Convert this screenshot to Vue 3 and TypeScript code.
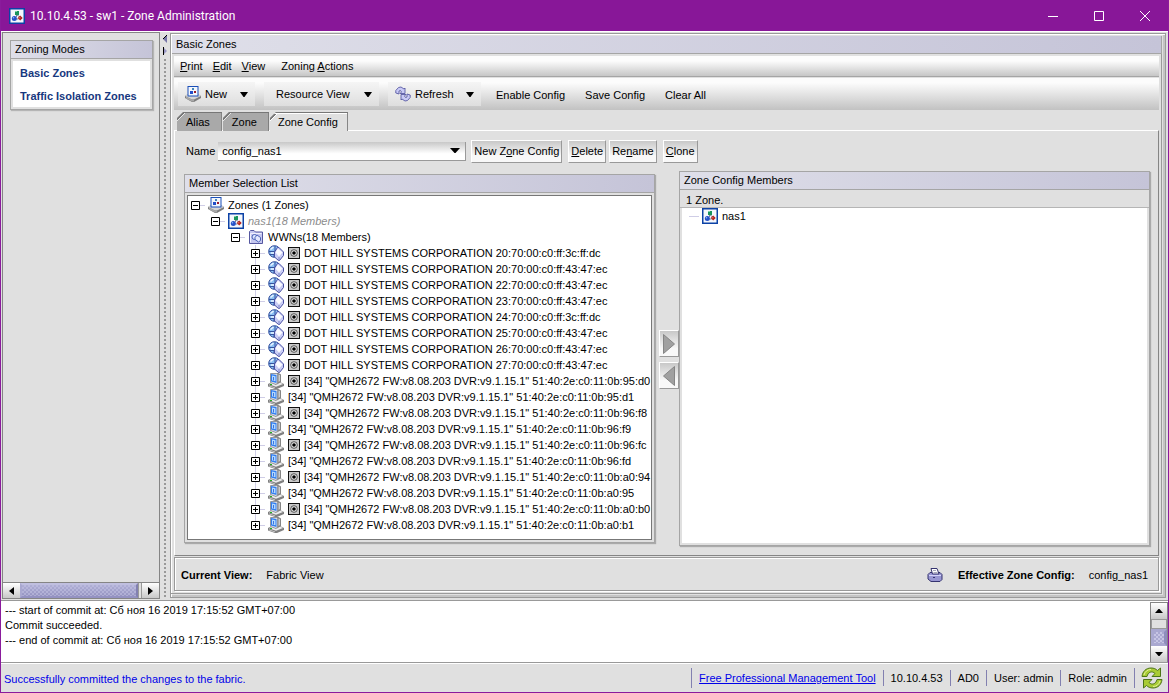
<script setup lang="ts">
import { ref } from 'vue'

interface TreeRow {
  level: number
  icon: string
  label: string
  target?: boolean
  open?: boolean
}

const storage = [
  '20:70:00:c0:ff:3c:ff:dc',
  '20:70:00:c0:ff:43:47:ec',
  '22:70:00:c0:ff:43:47:ec',
  '23:70:00:c0:ff:43:47:ec',
  '24:70:00:c0:ff:3c:ff:dc',
  '25:70:00:c0:ff:43:47:ec',
  '26:70:00:c0:ff:43:47:ec',
  '27:70:00:c0:ff:43:47:ec',
]
const hosts = ['95:d0', '95:d1', '96:f8', '96:f9', '96:fc', '96:fd', 'a0:94', 'a0:95', 'a0:b0', 'a0:b1']

const rows: TreeRow[] = [
  { level: 0, icon: 'zones', label: 'Zones (1 Zones)', open: true },
  { level: 1, icon: 'zone', label: 'nas1(18 Members)', open: true },
  { level: 2, icon: 'folder', label: 'WWNs(18 Members)', open: true },
  ...storage.map((wwn) => ({
    level: 3,
    icon: 'storage',
    label: `DOT HILL SYSTEMS CORPORATION ${wwn}`,
    target: true,
  })),
  ...hosts.map((id, i) => ({
    level: 3,
    icon: 'host',
    label: `[34] "QMH2672 FW:v8.08.203 DVR:v9.1.15.1" 51:40:2e:c0:11:0b:${id}`,
    target: i % 2 === 0,
  })),
]

const config = ref('config_nas1')
const log = `--- start of commit at: Сб ноя 16 2019 17:15:52 GMT+07:00
Commit succeeded.
--- end of commit at: Сб ноя 16 2019 17:15:52 GMT+07:00`
</script>

<template>
  <div class="window">
    <svg class="defs" aria-hidden="true">
      <symbol id="zone" viewBox="0 0 16 16">
        <rect x="0.75" y="0.75" width="14.5" height="14.5" fill="#f4f7fc" stroke="#0c42a6" stroke-width="1.5" />
        <path d="M7.500 6v3M8 7l3 2M6.500 11h3" stroke="#7a8296" stroke-width="1" />
        <rect x="6" y="3" width="4" height="4" fill="#19945c" />
        <rect x="6" y="3" width="2" height="1" fill="#7ed0a4" />
        <circle cx="5.3" cy="10.600" r="2.500" fill="#2450c8" />
        <circle cx="4.500" cy="9.700" r="0.800" fill="#91b4f5" />
        <path d="M11.200 7.500 13.700 10l-2.500 2.500L8.700 10z" fill="#b3201c" />
        <path d="M10.300 9.200h1v1h-1z" fill="#f09a8c" />
      </symbol>
      <symbol id="zones" viewBox="0 0 16 16">
        <path d="M0 10 3 8h10l3 2v2l-7 4H7l-7-4z" fill="#7d7d7d" />
        <path d="M0 10 3 8h10l3 2-7 3.500H7z" fill="#d6d6d6" />
        <path d="M1 12.500 7 15.500h2V13.500H7L1 10.500z" fill="#a8a8a8" />
        <rect x="3" y="0.500" width="10" height="9.500" fill="#f4f7fc" stroke="#1a4fb8" />
        <rect x="7" y="2" width="2" height="2" fill="#4585b8" />
        <rect x="5" y="5" width="3" height="3" fill="#2450c8" />
        <rect x="9" y="5" width="2" height="2" fill="#9c1c2c" />
      </symbol>
      <symbol id="folder" viewBox="0 0 16 16">
        <path d="M1.500 14.500v-12l1-1H6L7.500 3h7v11.500z" fill="#c5c7ef" stroke="#5557a0" />
        <path d="M2.500 13.500v-9h11" fill="none" stroke="#f0f0ff" />
        <circle cx="6.500" cy="8" r="2.500" fill="#dce6ff" stroke="#4b63b8" />
        <path d="M7 8.500 9 6l3.500 2.500v3L10.500 13 7 10.500z" fill="#e4e8ff" stroke="#4b63b8" />
      </symbol>
      <symbol id="storage" viewBox="0 0 16 16">
        <circle cx="6.500" cy="6.500" r="5.800" fill="#8cc0f4" stroke="#2c4798" />
        <path d="M1 6.500h6V1M2 9.500h4v3" fill="none" stroke="#35559f" />
        <path d="M2.500 4.500 5.500 2M3 8h3" stroke="#e9f5ff" stroke-width="1.500" />
        <path d="M9.500 2.500h1.500L15.500 7v3.500L11.500 15.500h-1L6.500 12V7z" fill="#c9cdf4" stroke="#4a51a4" />
        <path d="M9.800 3.500 14.500 7.500 11 11.500 7.500 7.500z" fill="#fbfbff" />
        <path d="M11 12v3" stroke="#7b82c8" />
      </symbol>
      <symbol id="host" viewBox="0 0 16 16">
        <path d="M0 11 4 9h8l4 2v2l-7 3H7l-7-2.500z" fill="#808080" />
        <path d="M1 11.300 4 9.500h8l3 1.500-7 2.800z" fill="#ececec" />
        <path d="M1 12.500 7 14.500v.8l-6-2z" fill="#d5d5d5" />
        <path d="M2 11.500h2" stroke="#20b020" />
        <path d="M7 0h3.500L13 1.500V9l-4 2.500H7z" fill="#858585" />
        <path d="M10.500 1.500 12 2v6l-1.500 1z" fill="#cdcdcd" />
        <path d="M2.500.5h6l1 1v8.500L8 11.500 2.500 9.500z" fill="#e3e3e3" stroke="#92969f" />
        <path d="M3 1 8.500 2v8L3 8.500z" fill="#2f7df2" />
        <path d="M4 2.500l3.500.7v5L4 7.500z" fill="#b4daff" />
        <path d="M5.500 4v3.500" stroke="#3a74e0" />
      </symbol>
      <symbol id="target" viewBox="0 0 12 12">
        <rect x="0.500" y="0.500" width="11" height="11" fill="#c8c8c8" stroke="#111" />
        <circle cx="6" cy="6" r="3.300" fill="#ededed" stroke="#333" stroke-width="0.800" />
        <circle cx="6" cy="6" r="1.800" fill="#000" />
      </symbol>
      <symbol id="refresh" viewBox="0 0 16 16">
        <path d="M.8 7V4.500L3.500 1.500 6 1l3 2 1-1v5.500H5L6.500 6 5.500 4.500 4 5v3z" fill="#c9caf6" stroke="#5a5ba4" stroke-width="0.900" />
        <path d="M15.200 9v2.500L12.500 14.500 10 15l-3-2-1 1V8.500h5L9.500 10l1 1.500L12 11V8z" fill="#c9caf6" stroke="#5a5ba4" stroke-width="0.900" />
      </symbol>
      <symbol id="printer" viewBox="0 0 16 16">
        <path d="M1 7.500 3 5.500h10l2 2v5L13 14.500H4L1 12z" fill="#9896d2" stroke="#35336f" />
        <path d="M4 1.500h6L12 7H5.500z" fill="#fff" stroke="#35336f" />
        <path d="M6 3.500h3M6.500 5.500h4" stroke="#a9a9bc" />
        <path d="M2 8.500h12" stroke="#d5d4fa" />
        <path d="M6 10.500h2" stroke="#35336f" />
      </symbol>
      <symbol id="sync" viewBox="0 0 22 22">
        <path d="M1 9.500C1.500 4.500 5 1 10 1c3 0 5 1 6.500 2.500L19.500 1v8.500H11l3-3C11 3.500 7 5 6 9.500z" fill="#a9cc35" stroke="#4d7418" />
        <path d="M21 12.500C20.500 17.500 17 21 12 21c-3 0-5-1-6.500-2.500L2.500 21v-8.500H11l-3 3c3 3 7 1.500 8-3z" fill="#a9cc35" stroke="#4d7418" />
        <path d="M3 8C4 4.500 6.500 2.500 10 2.500M19 14c-1 3.500-3.500 5.500-7 5.500" fill="none" stroke="#e2f09d" />
      </symbol>
      <symbol id="down" viewBox="0 0 8 5"><path d="M0 0h8L4.500 5h-1z" /></symbol>
    </svg>

    <header class="titlebar">
      <svg class="i16"><use href="#zone" /></svg>
      <h1>10.10.4.53 - sw1 - Zone Administration</h1>
      <button aria-label="Minimize"><svg viewBox="0 0 10 10"><path d="M0 5.500h10" /></svg></button>
      <button aria-label="Maximize"><svg viewBox="0 0 10 10"><path d="M.5.500h9v9h-9z" /></svg></button>
      <button aria-label="Close"><svg viewBox="0 0 10 10"><path d="m0 0 10 10M10 0 0 10" /></svg></button>
    </header>

    <div class="body">
      <aside class="side">
        <nav class="modes">
          <h2 class="head">Zoning Modes</h2>
          <div class="links">
            <a href="#basic">Basic Zones</a>
            <a href="#isolation">Traffic Isolation Zones</a>
          </div>
        </nav>
        <div class="hscroll">
          <button aria-label="Scroll left"><svg viewBox="0 0 5 8"><path d="M5 0v8L0 4z" /></svg></button>
          <div class="thumb"></div>
          <div class="rest"></div>
          <button aria-label="Scroll right"><svg viewBox="0 0 5 8"><path d="M0 0v8l5-4z" /></svg></button>
        </div>
      </aside>
      <div class="divider">
        <button aria-label="Collapse left"><svg viewBox="0 0 4 8"><path d="M4 0v8L0 4z" fill="#7775a8" /><path d="M4 0 0 4" stroke="#000" /></svg></button>
        <button aria-label="Expand right"><svg viewBox="0 0 4 8"><path d="M0 0v8l4-4z" fill="#9896c5" /><path d="M.5 0v8" stroke="#000" /></svg></button>
        <div class="dots"></div>
      </div>

      <main class="panel">
        <h2 class="head">Basic Zones</h2>
        <div class="inner">
          <nav class="menubar">
            <button><u>P</u>rint</button>
            <button><u>E</u>dit</button>
            <button><u>V</u>iew</button>
            <button>Zoning <u>A</u>ctions</button>
          </nav>
          <div class="toolbar">
            <button class="drop new"><svg class="i16"><use href="#zones" /></svg>New<svg class="caret"><use href="#down" /></svg></button>
            <button class="drop view">Resource View<svg class="caret"><use href="#down" /></svg></button>
            <button class="drop reload"><svg class="i16"><use href="#refresh" /></svg>Refresh<svg class="caret"><use href="#down" /></svg></button>
            <button class="plain">Enable Config</button>
            <button class="plain">Save Config</button>
            <button class="plain">Clear All</button>
          </div>

          <div class="tabs" role="tablist">
            <button class="tab" role="tab">Alias</button>
            <button class="tab" role="tab">Zone</button>
            <button class="tab active" role="tab" aria-selected="true">Zone Config</button>
          </div>
          <section class="page">
            <div class="form">
              <label for="config">Name</label>
              <div class="combo">
                <select id="config" v-model="config"><option>config_nas1</option></select>
                <svg viewBox="0 0 10 5"><path d="M0 0h10L5.500 5h-1z" /></svg>
              </div>
              <button class="btn">New Z<u>o</u>ne Config</button>
              <button class="btn after"><u>D</u>elete</button>
              <button class="btn">Re<u>n</u>ame</button>
              <button class="btn after"><u>C</u>lone</button>
            </div>
            <div class="lists">
              <section class="card members">
                <h3 class="head">Member Selection List</h3>
                <ul class="tree">
                  <li v-for="(row, i) in rows" :key="i" :class="['row', `level-${row.level}`]">
                    <button class="toggle" :aria-label="row.open ? 'Collapse' : 'Expand'">
                      <svg viewBox="0 0 9 9"><path d="M.5.500h8v8h-8z" fill="#fff" stroke="#000" /><path d="M2 4.500h5" stroke="#000" /><path v-if="!row.open" d="M4.500 2v5" stroke="#000" /></svg>
                    </button>
                    <span class="dash"></span>
                    <svg class="i16"><use :href="`#${row.icon}`" /></svg>
                    <svg v-if="row.target" class="mark"><use href="#target" /></svg>
                    <span class="label">{{ row.label }}</span>
                  </li>
                </ul>
              </section>
              <div class="movers">
                <button aria-label="Add to config"><svg viewBox="0 0 12 20"><path d="M.5.500 11.500 10 .5 19.500z" /></svg></button>
                <button aria-label="Remove from config"><svg viewBox="0 0 12 20"><path d="M11.500.500.500 10l11 9.500z" /></svg></button>
              </div>
              <section class="card chosen">
                <h3 class="head">Zone Config Members</h3>
                <p class="count">1 Zone.</p>
                <ul class="picked">
                  <li><span class="dash"></span><svg class="i16"><use href="#zone" /></svg><span>nas1</span></li>
                </ul>
              </section>
            </div>
          </section>
          <footer class="current">
            <b>Current View:</b><span>Fabric View</span>
            <svg class="i16"><use href="#printer" /></svg>
            <b>Effective Zone Config:</b><span>config_nas1</span>
          </footer>
        </div>
      </main>
    </div>

    <div class="log">
      <textarea readonly aria-label="Log" :value="log"></textarea>
      <div class="vscroll">
        <button aria-label="Scroll up"><svg viewBox="0 0 8 4"><path d="M0 4h8L4.500 0h-1z" /></svg></button>
        <div class="track"></div>
        <div class="thumb"></div>
        <button aria-label="Scroll down"><svg viewBox="0 0 8 4"><path d="M0 0h8L4.500 4h-1z" /></svg></button>
      </div>
    </div>

    <footer class="status">
      <p>Successfully committed the changes to the fabric.</p>
      <span class="cell tall"><a href="#tool">Free Professional Management Tool</a></span>
      <span class="cell">10.10.4.53</span>
      <span class="cell">AD0</span>
      <span class="cell">User: admin</span>
      <span class="cell">Role: admin</span>
      <span class="cell tall"><svg class="sync"><use href="#sync" /></svg></span>
    </footer>
  </div>
</template>

<style>
body {
  margin: 0;
}
</style>

<style scoped>
* {
  box-sizing: border-box;
}
.window {
  display: flex;
  flex-direction: column;
  height: 100vh;
  border: solid #8a1b9c;
  border-width: 0 1px 1px;
  background: #e0e0e0;
  color: #000;
  font: 11px/16px 'Liberation Sans', Arial, sans-serif;
  white-space: nowrap;
  overflow: hidden;
}
.defs {
  position: absolute;
  width: 0;
  height: 0;
}
button {
  flex: none;
  padding: 0;
  border: 0;
  background: none;
  color: inherit;
  font: inherit;
  white-space: nowrap;
}
u {
  text-underline-offset: 1px;
}
h1, h2, h3, p, ul {
  margin: 0;
  padding: 0;
  font: inherit;
  list-style: none;
}
svg {
  display: block;
  flex: none;
}
.i16 {
  width: 16px;
  height: 16px;
}

.titlebar {
  display: flex;
  flex: none;
  align-items: center;
  height: 31px;
  padding-left: 8px;
  background: #881798;
  color: #fff;
}
.titlebar h1 {
  flex: 1;
  margin-left: 5px;
  font: 12px/16px Roboto, 'Open Sans', sans-serif;
}
.titlebar button {
  display: flex;
  justify-content: center;
  width: 46px;
}
.titlebar button svg {
  width: 10px;
  height: 10px;
  fill: none;
  stroke: #fff;
}

.body {
  display: flex;
  flex: 1;
  min-height: 0;
  padding: 0 1px;
  border-top: 1px solid #fff;
}
.side {
  display: flex;
  flex-direction: column;
  flex: none;
  justify-content: space-between;
  width: 158px;
  border: 1px solid #858585;
}
.head {
  flex: none;
  height: 18px;
  padding-left: 4px;
  border-bottom: 1px solid #a5a5a5;
  background: linear-gradient(90deg, #dfdfe9, #c5c4d8);
  line-height: 17px;
}
.modes {
  margin: 7px 6px 0 7px;
  border: 1px solid #a5a5a5;
  box-shadow: 1px 1px 1px #b5b5b5;
}
.links {
  display: flex;
  flex-direction: column;
  gap: 7px;
  margin: 2px;
  padding: 4px 7px 3px;
  background: #fff;
}
.links a {
  color: #17387e;
  font-weight: bold;
  text-decoration: none;
}
.hscroll {
  display: flex;
  height: 16px;
  border-top: 1px solid #858585;
}
.hscroll button,
.vscroll button {
  display: flex;
  align-items: center;
  justify-content: center;
  background: linear-gradient(#fff, #c8c8c8);
}
.hscroll button {
  width: 17px;
}
.hscroll button svg {
  width: 5px;
  height: 8px;
}
.hscroll .thumb {
  flex: 1;
  border: 2px solid #a9a8d0;
  border-color: #c0bfe0 #8280b0 #9492c2 #a9a8d0;
  background:
    repeating-conic-gradient(#c6c5e480 0 25%, transparent 0 50%) 0 0 / 4px 4px,
    linear-gradient(#b0afd6, #9695c2);
}
.hscroll .rest {
  width: 4px;
  border: solid #999;
  border-width: 0 1px;
}
.divider {
  display: flex;
  flex-direction: column;
  align-items: center;
  gap: 4px;
  width: 10px;
  padding-top: 3px;
}
.divider svg {
  width: 4px;
  height: 8px;
}
.dots {
  flex: 1;
  width: 3px;
  background:
    radial-gradient(circle at 1px 1px, #999 1px, transparent 1px) 0 0 / 4px 4px;
}

.panel {
  display: flex;
  flex: 1;
  flex-direction: column;
  min-width: 0;
  margin: 1px 1px 1px 0;
  padding: 1px 3px 3px 0;
  border: 1px solid #9a9a9a;
  box-shadow: inset 1px 1px #fff, inset -2px -2px #c4c4c4;
}
.panel > .head {
  margin: 1px 0 0 1px;
  border-right: 1px solid #a5a5a5;
}
.inner {
  display: flex;
  flex: 1;
  flex-direction: column;
  min-height: 0;
  padding: 2px 2px 2px 3px;
  border-right: 1px solid #9a9a9a;
  border-bottom: 1px solid #9a9a9a;
}
.menubar {
  display: flex;
  flex: none;
  gap: 10px;
  height: 21px;
  padding-left: 6px;
  border-bottom: 1px solid #a5a5a5;
  background: linear-gradient(#fcfcfc 25%, #c6c6c6);
}
.menubar button:last-child {
  margin-left: 6px;
}
.toolbar {
  display: flex;
  flex: none;
  align-items: stretch;
  height: 32px;
  margin-top: 1px;
  padding: 0 4px;
  background: linear-gradient(#fcfcfc 15%, #c2c2c2);
}
.drop {
  display: flex;
  align-items: center;
  gap: 4px;
  margin: 4px 9px 4px 0;
  padding: 0 7px;
  background: linear-gradient(#f5f5f5, #dedede);
}
.new {
  width: 77px;
}
.view {
  width: 115px;
  padding-left: 12px;
}
.reload {
  width: 93px;
}
.caret {
  width: 8px;
  height: 5px;
  margin-left: auto;
}
.plain {
  padding: 2px 0 0;
  margin-left: 6px;
  margin-right: 14px;
}
.tabs {
  display: flex;
  flex: none;
  z-index: 1;
  gap: 1px;
  height: 19px;
  margin: 2px 0 -1px 3px;
}
.tab {
  padding: 0 11px 0 9px;
  border: solid #777;
  border-width: 1px 1px 0 0;
  background: linear-gradient(135deg, #777 5px, #e8e8e8 5px, #e8e8e8 6px, #a9a9a9 6px);
  clip-path: polygon(0 6px, 6px 0, 100% 0, 100% 100%, 0 100%);
}
.tab.active {
  padding-left: 8px;
  padding-right: 9px;
  background: linear-gradient(135deg, #777 5px, #fff 5px, #fff 6px, #e0e0e0 6px);
  box-shadow: inset 0 1px #fff;
}
.page {
  display: flex;
  flex: 1;
  flex-direction: column;
  min-height: 0;
  padding: 8px 8px 9px 9px;
  border: 1px solid #fff;
  border-color: #fff #858585 #858585 #fff;
}
.form {
  display: flex;
  flex: none;
  align-items: center;
  gap: 3px;
  height: 24px;
  padding-left: 2px;
}
.combo {
  position: relative;
  width: 248px;
  height: 19px;
  margin: 1px 2px 0 0;
}
.combo select {
  display: block;
  width: 100%;
  height: 100%;
  padding: 0 4px;
  border: solid #999;
  border-width: 0 1px 1px 0;
  border-radius: 0;
  background: linear-gradient(#c8c8c8, #fff 65%);
  color: #000;
  font: inherit;
  appearance: none;
}
.combo svg {
  position: absolute;
  top: 6px;
  right: 6px;
  width: 10px;
  height: 5px;
  pointer-events: none;
}
.btn {
  height: 23px;
  padding: 0 2px;
  border: 1px solid #fff;
  border-right-color: #999;
  border-bottom-color: #999;
  background: linear-gradient(#c8c8c8, #f8f8f8 70%);
}
.btn.after {
  margin-left: 3px;
}
.lists {
  display: flex;
  flex: 1;
  min-height: 0;
  margin-top: 8px;
}
.card {
  display: flex;
  flex: 1;
  flex-direction: column;
  min-width: 0;
  border: 1px solid #a5a5a5;
  box-shadow: 1px 1px 1px #aaa;
}
.members {
  margin: 3px 0;
}
.tree {
  flex: 1;
  min-height: 0;
  margin: 2px;
  padding: 1px 0 0 3px;
  border: 1px solid #777;
  background: #fff;
  overflow: hidden;
}
.row {
  display: flex;
  align-items: center;
  height: 16px;
}
.level-1 {
  padding-left: 20px;
  color: #8c8c8c;
  font-style: italic;
}
.level-2 {
  padding-left: 40px;
}
.level-3 {
  padding-left: 60px;
  background: linear-gradient(#cfcde6, #cfcde6) 64px 0 / 1px 16px no-repeat;
}
.level-3:last-child {
  background-size: 1px 8px;
}
.toggle svg {
  width: 9px;
  height: 9px;
}
.dash {
  flex: none;
  width: 5px;
  height: 1px;
  margin-right: 3px;
  background: #cfcde6;
}
.mark {
  width: 12px;
  height: 12px;
  margin: 0 0 0 4px;
}
.label {
  margin-left: 4px;
}
.movers {
  display: flex;
  flex: none;
  flex-direction: column;
  gap: 5px;
  width: 20px;
  margin: 159px 0 0 4px;
}
.movers button {
  display: flex;
  align-items: center;
  justify-content: center;
  height: 27px;
  border: 1px solid #fff;
  border-right-color: #999;
  border-bottom-color: #999;
  background: linear-gradient(#c8c8c8, #f8f8f8 70%);
}
.movers svg {
  width: 12px;
  height: 20px;
  fill: #a0a0a0;
  stroke: #858585;
}
.count {
  padding-left: 6px;
  border-bottom: 1px solid #b5b5b5;
  height: 18px;
  line-height: 20px;
}
.picked {
  flex: 1;
  margin: 0 2px 2px;
  padding-left: 7px;
  background: #fff;
}
.picked li {
  display: flex;
  align-items: center;
}
.picked .dash {
  width: 10px;
}
.picked span:last-child {
  margin-left: 4px;
}
.current {
  display: flex;
  flex: none;
  align-items: center;
  height: 34px;
  margin-top: 1px;
  padding: 1px 10px 0 6px;
  border: 1px solid #999;
  box-shadow: inset 1px 1px #fff, 1px 1px #fff;
}
.current span {
  margin-left: 14px;
}
.current .i16 {
  margin-left: auto;
}
.current b {
  font-size: 11px;
}
.current .i16 + b {
  margin-left: 15px;
}

.log {
  display: flex;
  flex: none;
  height: 63px;
  margin-top: 1px;
  border: solid #999;
  border-width: 1px 0;
  background: #fff;
}
.log textarea {
  flex: 1;
  padding: 2px 4px;
  border: 0;
  background: #fff;
  color: #000;
  font: inherit;
  line-height: 15px;
  resize: none;
  overflow: hidden;
  outline: 0;
}
.vscroll {
  display: flex;
  flex-direction: column;
  width: 18px;
  margin-top: 1px;
  border: solid #858585;
  border-width: 1px 1px 0;
  background: #e0e0e0;
}
.vscroll button {
  height: 16px;
}
.vscroll button svg {
  width: 8px;
  height: 4px;
}
.vscroll .track {
  flex: 1;
  border: 1px solid #999;
}
.vscroll .thumb {
  height: 17px;
  border: 3px solid #a9a8d0;
  border-right-color: #8f8dbc;
  background: repeating-conic-gradient(#c6c5e4 0 25%, #a9a8d0 0 50%) 0 0 / 4px 4px;
}
.status {
  display: flex;
  flex: none;
  align-items: center;
  height: 29px;
  padding: 0 5px 0 3px;
  border-top: 1px solid #fff;
}
.status p {
  flex: 1;
  padding-top: 2px;
  color: #0000e8;
}
.status a {
  color: #0000e8;
}
.cell {
  display: flex;
  align-items: center;
  height: 16px;
  padding: 0 7px;
  border-left: 1px solid #8280b0;
}
.cell.tall {
  height: 20px;
}
.cell:last-child {
  padding: 0 0 0 6px;
}
.sync {
  width: 22px;
  height: 22px;
}
</style>
